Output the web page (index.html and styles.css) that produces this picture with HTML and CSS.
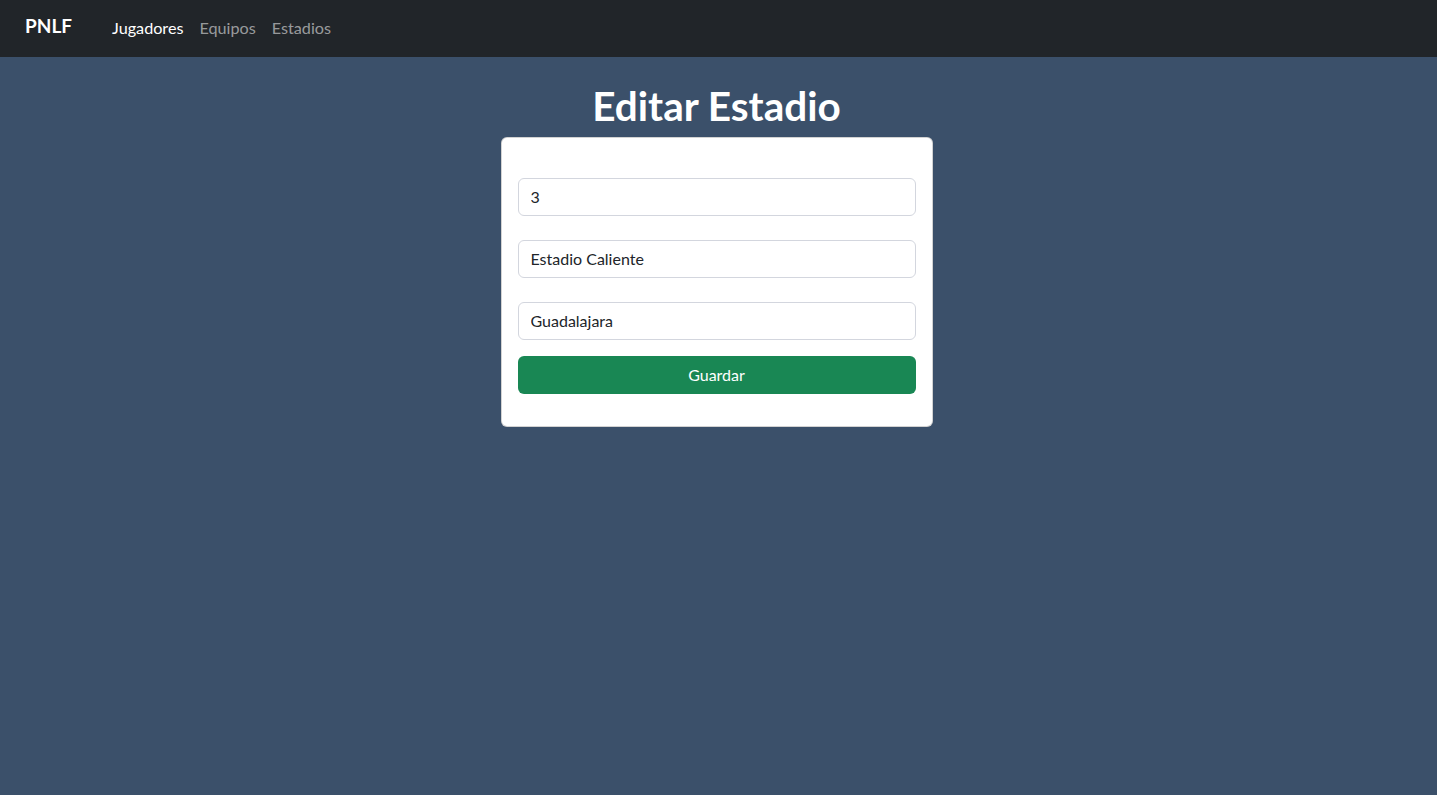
FILE: index.html
```html
<!DOCTYPE html>
<html lang="es">
<head>
<meta charset="utf-8">
<title>Editar Estadio</title>
<link rel="stylesheet" href="styles.css">
</head>
<body>
<nav class="navbar">
  <a class="brand" href="#">PNLF</a>
  <ul class="nav">
    <li><a class="nav-link active" href="#">Jugadores</a></li>
    <li><a class="nav-link" href="#">Equipos</a></li>
    <li><a class="nav-link" href="#">Estadios</a></li>
  </ul>
</nav>
<main class="main">
  <h1 class="title">Editar Estadio</h1>
  <form class="card">
    <div class="field"><input class="input" type="text" value="3"></div>
    <div class="field"><input class="input" type="text" value="Estadio Caliente"></div>
    <div class="field"><input class="input" type="text" value="Guadalajara"></div>
    <button class="btn" type="button">Guardar</button>
  </form>
</main>
</body>
</html>
```
FILE: styles.css
```css
* { box-sizing: border-box; }
html, body { margin: 0; height: 100%; }
body {
  background: #3b506a;
  font-family: "Segoe UI", "Lato", "Noto Sans", sans-serif;
  font-size: 16px;
  color: #212529;
}
.navbar {
  height: 57px;
  background: #212529;
  display: flex;
  align-items: center;
  padding: 0 25px;
}
.brand {
  color: #fff;
  text-decoration: none;
  font-weight: 700;
  font-size: 19px;
  margin-right: 40px;
  margin-top: -6px;
}
.nav {
  display: flex;
  list-style: none;
  margin: -2px 0 0;
  padding: 0;
  gap: 16px;
}
.nav-link {
  color: rgba(255,255,255,0.55);
  text-decoration: none;
  font-size: 16.2px;
}
.nav-link.active { color: #fff; }
.main {
  display: flex;
  flex-direction: column;
  align-items: center;
  padding-right: 4px;
}
.title {
  color: #fff;
  font-size: 40.5px;
  font-weight: 700;
  line-height: 48px;
  margin: 25px 0 7px;
}
.card {
  width: 432px;
  background: #fff;
  border: 1px solid rgba(0,0,0,0.175);
  border-radius: 6px;
  padding: 40px 16px 32px;
  display: flex;
  flex-direction: column;
}
.field { margin-bottom: 24px; }
.field:nth-child(3) { margin-bottom: 16px; }
.input {
  width: 100%;
  height: 38px;
  border: 1px solid #d3d6de;
  border-radius: 6px;
  padding: 5px 12px 7px;
  font: inherit;
  color: #212529;
  background: #fff;
}
.btn {
  height: 38px;
  border: none;
  border-radius: 6px;
  background: #198754;
  color: #fff;
  font: inherit;
  padding-bottom: 2px;
}
```
